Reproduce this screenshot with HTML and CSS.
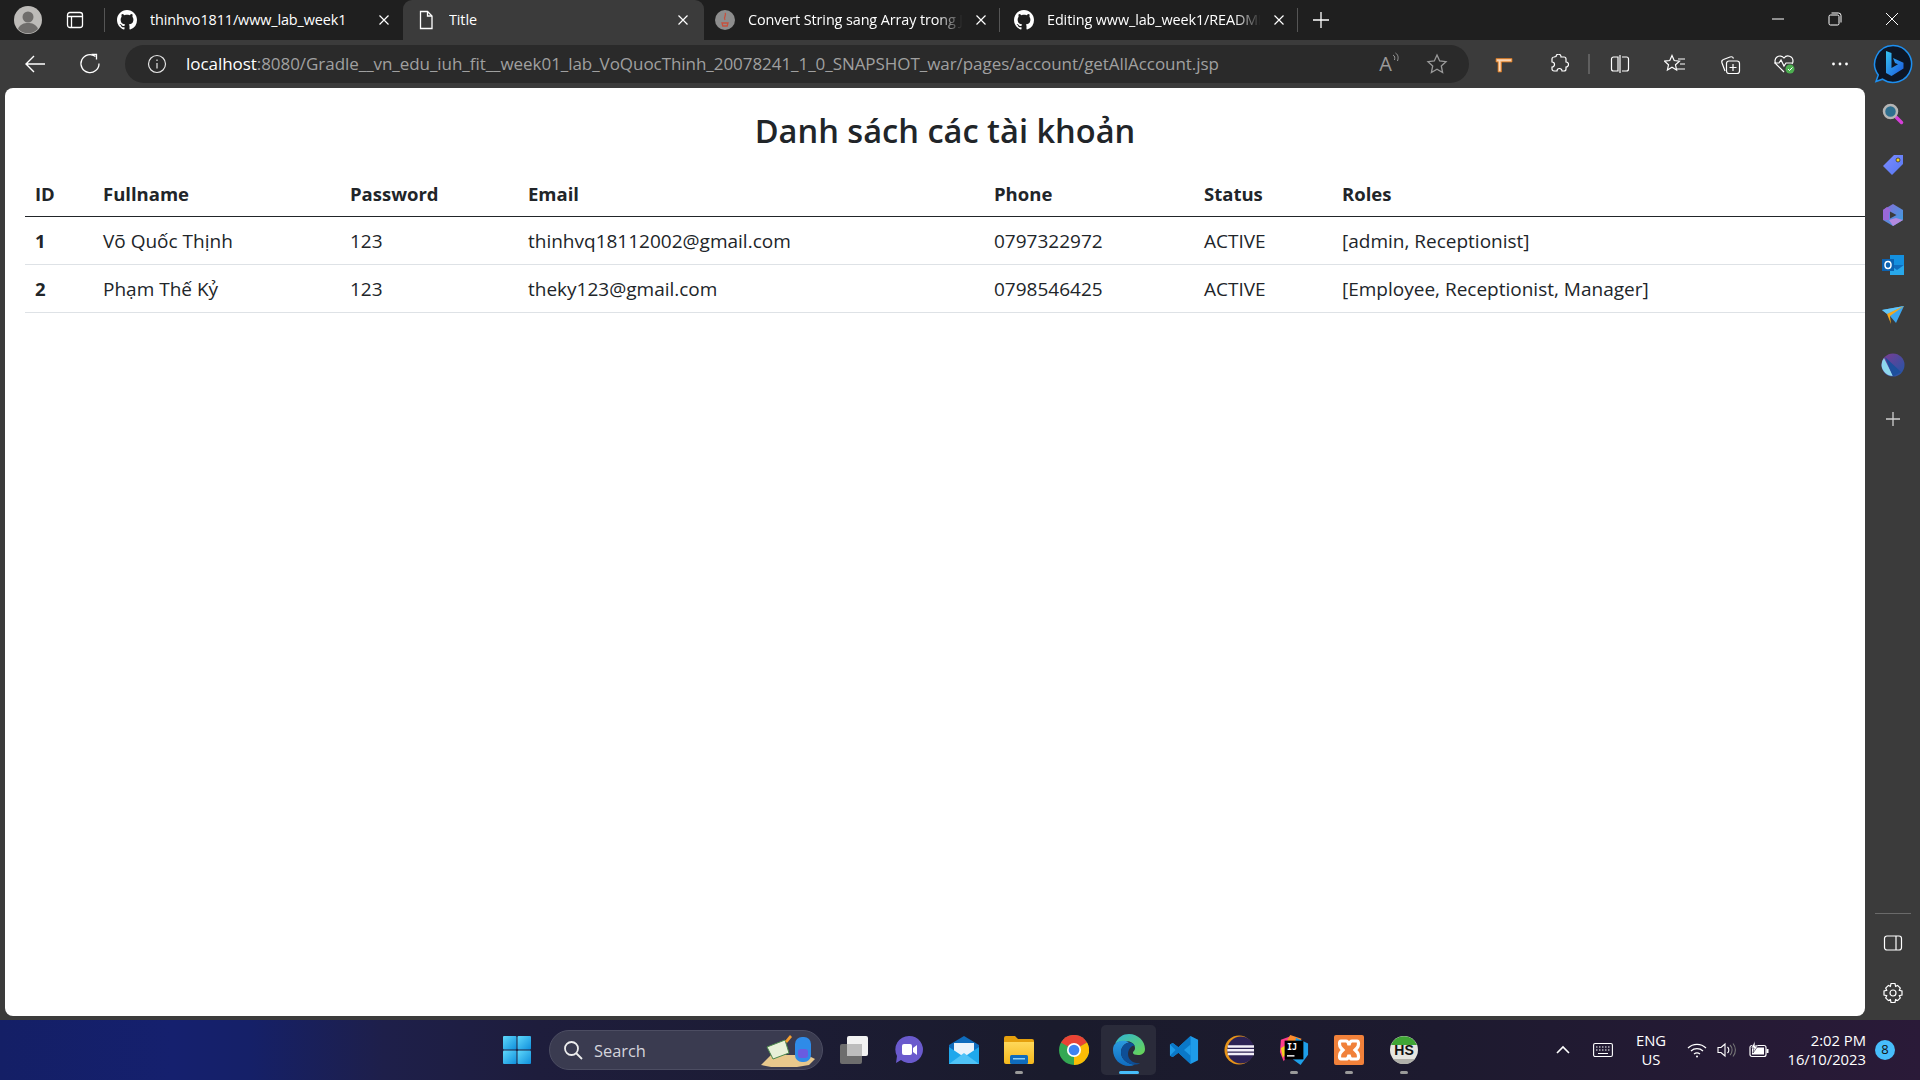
FILE: index.html
```html
<!DOCTYPE html>
<html lang="vi">
<head>
<meta charset="utf-8">
<title>Title</title>
<link rel="stylesheet" href="styles.css">
</head>
<body>
<svg class="defs" width="0" height="0"><defs>
<symbol id="gh" viewBox="0 0 16 16"><path fill="#fff" d="M8 0C3.58 0 0 3.58 0 8c0 3.54 2.29 6.53 5.47 7.59.4.07.55-.17.55-.38 0-.19-.01-.82-.01-1.49-2.01.37-2.53-.49-2.69-.94-.09-.23-.48-.94-.82-1.13-.28-.15-.68-.52-.01-.53.63-.01 1.08.58 1.23.82.72 1.21 1.87.87 2.33.66.07-.52.28-.87.51-1.07-1.78-.2-3.64-.89-3.64-3.95 0-.87.31-1.59.82-2.15-.08-.2-.36-1.02.08-2.12 0 0 .67-.21 2.2.82.64-.18 1.32-.27 2-.27.68 0 1.36.09 2 .27 1.53-1.04 2.2-.82 2.2-.82.44 1.1.16 1.92.08 2.12.51.56.82 1.27.82 2.15 0 3.07-1.87 3.75-3.65 3.95.29.25.54.73.54 1.48 0 1.07-.01 1.93-.01 2.2 0 .21.15.46.55.38A8.013 8.013 0 0016 8c0-4.42-3.58-8-8-8z"/></symbol>
<symbol id="x" viewBox="0 0 12 12"><path d="M1.5 1.5l9 9M10.5 1.5l-9 9" stroke="#fff" stroke-width="1.2" fill="none"/></symbol>
<linearGradient id="edgeA" x1="0" y1="0" x2="1" y2="1"><stop offset="0" stop-color="#2fb4d8"/><stop offset="1" stop-color="#6ad64f"/></linearGradient>
<linearGradient id="edgeB" x1="0" y1="0" x2="0" y2="1"><stop offset="0" stop-color="#2b9be0"/><stop offset="1" stop-color="#0f6cc0"/></linearGradient>
<linearGradient id="bingG" x1="0" y1="0" x2="1" y2="1"><stop offset="0" stop-color="#36c3f0"/><stop offset="1" stop-color="#1a56e0"/></linearGradient>
<linearGradient id="winG" x1="0" y1="0" x2="1" y2="1"><stop offset="0" stop-color="#5fd8fb"/><stop offset="1" stop-color="#0f8fdc"/></linearGradient>
<linearGradient id="tagG" x1="0" y1="0" x2="1" y2="1"><stop offset="0" stop-color="#7d8cff"/><stop offset="1" stop-color="#5577f2"/></linearGradient>
<linearGradient id="m365" x1="0" y1="0" x2="1" y2="1"><stop offset="0" stop-color="#8c6ad8"/><stop offset="1" stop-color="#35a3e0"/></linearGradient>
<linearGradient id="folderG" x1="0" y1="0" x2="0" y2="1"><stop offset="0" stop-color="#ffd85a"/><stop offset="1" stop-color="#f5b81c"/></linearGradient>
<linearGradient id="grad365" x1="0" y1="0" x2="1" y2="1"><stop offset="0" stop-color="#7f3b92"/><stop offset="1" stop-color="#1d57a8"/></linearGradient>
</defs></svg>

<header class="tabstrip">
  <div class="strip-btn avatar-cell">
    <svg width="28" height="28" viewBox="0 0 28 28"><circle cx="14" cy="14" r="14" fill="#bdbbb8"/><circle cx="14" cy="11" r="5.5" fill="#6f6d6b"/><path d="M4 23c2-5 6-6 10-6s8 1 10 6a14 14 0 0 1-20 0z" fill="#6f6d6b"/></svg>
  </div>
  <div class="strip-btn tabmode-cell">
    <svg width="18" height="18" viewBox="0 0 18 18" fill="none" stroke="#fff" stroke-width="1.3"><rect x="1.5" y="1.5" width="15" height="15" rx="2.5"/><path d="M1.5 5.5h15M5.5 5.5v11"/></svg>
  </div>
  <div class="tab tab-sep">
    <svg class="fav" viewBox="0 0 16 16"><use href="#gh"/></svg>
    <span class="tab-title">thinhvo1811/www_lab_week1</span>
    <svg class="close" viewBox="0 0 12 12"><use href="#x"/></svg>
  </div>
  <div class="tab tab-active">
    <svg class="fav" viewBox="0 0 20 20" fill="none" stroke="#fff" stroke-width="1.3"><path d="M4.500 1.500h7l4.500 4.500v12.500h-11.500z"/><path d="M11.500 1.500v4.500h4.500"/></svg>
    <span class="tab-title">Title</span>
    <svg class="close" viewBox="0 0 12 12"><use href="#x"/></svg>
  </div>
  <div class="tab tab-third">
    <svg class="fav" viewBox="0 0 20 20"><circle cx="10" cy="10" r="10" fill="#8d8d8d"/><path d="M10 3c2 2-2 4 0 7M7 13h6l-.8 3h-4.400z" stroke="#c8503c" stroke-width="1.300" fill="none"/></svg>
    <span class="tab-title tab-fade">Convert String sang Array trong Java</span>
    <svg class="close" viewBox="0 0 12 12"><use href="#x"/></svg>
  </div>
  <div class="tab tab-sep tab-fourth">
    <svg class="fav" viewBox="0 0 16 16"><use href="#gh"/></svg>
    <span class="tab-title tab-fade">Editing www_lab_week1/README.md</span>
    <svg class="close" viewBox="0 0 12 12"><use href="#x"/></svg>
  </div>
  <div class="newtab">
    <svg width="18" height="18" viewBox="0 0 18 18" stroke="#fff" stroke-width="1.300"><path d="M9 1v16M1 9h16"/></svg>
  </div>
  <div class="winctl">
    <div class="win-btn"><svg width="14" height="14" viewBox="0 0 14 14" stroke="#fff" stroke-width="1"><path d="M1 7h12"/></svg></div>
    <div class="win-btn"><svg width="14" height="14" viewBox="0 0 14 14" stroke="#fff" stroke-width="1" fill="none"><rect x="1" y="3" width="10" height="10" rx="1.500"/><path d="M3.500 1h7a2.500 2.500 0 0 1 2.500 2.500v7"/></svg></div>
    <div class="win-btn"><svg width="14" height="14" viewBox="0 0 14 14" stroke="#fff" stroke-width="1"><path d="M1 1l12 12M13 1l-12 12"/></svg></div>
  </div>
</header>

<nav class="toolbar">
  <div class="tb-btn"><svg width="22" height="22" viewBox="0 0 22 22" fill="none" stroke="#fff" stroke-width="1.400"><path d="M21 11H2M10 3l-8 8 8 8"/></svg></div>
  <div class="tb-btn"><svg width="22" height="22" viewBox="0 0 22 22" fill="none" stroke="#fff" stroke-width="1.300"><path d="M16.500 3.500a9 9 0 1 0 3.500 7"/><path d="M12.500 1.500h5v5"/></svg></div>
  <div class="addr">
    <svg class="addr-info" width="20" height="20" viewBox="0 0 20 20" fill="none" stroke="#e6e6e6" stroke-width="1.200"><circle cx="10" cy="10" r="8.500"/><path d="M10 9v5.500M10 5.500v1.500"/></svg>
    <div class="url"><span class="url-host">localhost</span>:8080/Gradle__vn_edu_iuh_fit__week01_lab_VoQuocThinh_20078241_1_0_SNAPSHOT_war/pages/account/getAllAccount.jsp</div>
    <div class="read-aloud"><span class="ra-a">A</span><svg width="8" height="12" viewBox="0 0 8 12" fill="none" stroke="#9a9a9a"><path d="M1 3c2 1 2 3 1.500 5M3.500 1c3 2 3 5 2 8"/></svg></div>
    <svg class="addr-star" width="22" height="22" viewBox="0 0 22 22" fill="none" stroke="#9a9a9a" stroke-width="1.300"><path d="M11 2l2.700 6 6.300.7-4.700 4.300 1.300 6.500-5.600-3.300-5.600 3.300 1.300-6.500-4.700-4.300 6.300-.7z"/></svg>
  </div>
  <div class="tb-btn tb-first"><svg width="18" height="18" viewBox="0 0 18 18"><path d="M1 3.500h16v3.500H6.500v10H3V7H1z" fill="#f2b27a" stroke="#d9761a" stroke-width=".7"/><path d="M2 5.200h14M4.700 5.500v10.500" stroke="#fde3c8" stroke-width="1"/></svg></div>
  <div class="tb-btn"><svg width="20" height="20" viewBox="0 0 20 20" fill="none" stroke="#fff" stroke-width="1.200"><path d="M7 2.500a2.500 2.500 0 0 1 5 .5h3a2 2 0 0 1 2 2v3a2.500 2.500 0 0 1 0 5v2a2 2 0 0 1-2 2h-2a2.500 2.500 0 0 0-5 0H5a2 2 0 0 1-2-2v-2a2.500 2.500 0 0 0 0-5V5a2 2 0 0 1 2-2z"/></svg></div>
  <div class="tb-sep"></div>
  <div class="tb-btn"><svg width="20" height="20" viewBox="0 0 20 20" fill="none" stroke="#fff" stroke-width="1.200"><path d="M8 3H3.500a2 2 0 0 0-2 2v10a2 2 0 0 0 2 2H8zM10 1v18M12 3h4.500a2 2 0 0 1 2 2v10a2 2 0 0 1-2 2H12"/></svg></div>
  <div class="tb-btn"><svg width="22" height="20" viewBox="0 0 22 20" fill="none" stroke="#fff" stroke-width="1.200"><path d="M8 1.500l2.200 5 5.300.6-4 3.700 1.100 5.200L8 13.300 3.400 16l1.100-5.200-4-3.700 5.300-.6z"/><path d="M14 5h7M16 10h5M13 15h8"/></svg></div>
  <div class="tb-btn"><svg width="22" height="22" viewBox="0 0 22 22" fill="none" stroke="#fff" stroke-width="1.200"><path d="M6 18L3 10c-.5-1.500 0-3 1.500-3.500L11 4c1.500-.5 3 0 3.500 1.500"/><rect x="7.500" y="8" width="13" height="12.500" rx="2.500"/><path d="M14 11v7M10.500 14.500h7"/></svg></div>
  <div class="tb-btn"><svg width="24" height="22" viewBox="0 0 24 22"><path d="M11 19L3 11a5 5 0 0 1 8-6 5 5 0 0 1 9 3 5 5 0 0 1-1 3" fill="none" stroke="#fff" stroke-width="1.200"/><path d="M1 10h5l2-3 3 6 2-3h6" fill="none" stroke="#fff" stroke-width="1.200"/><circle cx="17" cy="16" r="4.500" fill="#4caf50"/><path d="M15 16l1.500 1.500 3-3" stroke="#fff" fill="none"/></svg></div>
  <div class="tb-btn"><svg width="18" height="6" viewBox="0 0 18 6" fill="#fff"><circle cx="2.500" cy="3" r="1.400"/><circle cx="9" cy="3" r="1.400"/><circle cx="15.500" cy="3" r="1.400"/></svg></div>
  <div class="tb-bing"><svg width="40" height="40" viewBox="0 0 40 40"><path d="M20 1.500a18.500 18.500 0 1 1-10.500 33.700L3 37.500l2.300-6.500A18.500 18.500 0 0 1 20 1.500z" fill="#0d1626" stroke="#1d8ff0" stroke-width="1.500"/><path d="M13 7l5.500 2v15l6.500-3.800-3-1.200-2-5 10.500 4.800v5.700L18.500 32 13 29z" fill="url(#bingG)"/></svg></div>
</nav>

<div class="main">
  <main class="page">
    <h1 class="page-title">Danh sách các tài khoản</h1>
    <table class="accounts">
      <colgroup><col class="c-id"><col class="c-name"><col class="c-pass"><col class="c-mail"><col class="c-phone"><col class="c-status"><col class="c-roles"></colgroup>
      <thead><tr><th>ID</th><th>Fullname</th><th>Password</th><th>Email</th><th>Phone</th><th>Status</th><th>Roles</th></tr></thead>
      <tbody>
        <tr><th>1</th><td>Võ Quốc Thịnh</td><td>123</td><td>thinhvq18112002@gmail.com</td><td>0797322972</td><td>ACTIVE</td><td>[admin, Receptionist]</td></tr>
        <tr><th>2</th><td>Phạm Thế Kỷ</td><td>123</td><td>theky123@gmail.com</td><td>0798546425</td><td>ACTIVE</td><td>[Employee, Receptionist, Manager]</td></tr>
      </tbody>
    </table>
  </main>
  <aside class="sidebar">
    <div class="side-btn"><svg width="22" height="22" viewBox="0 0 22 22"><path d="M13.500 13.500l6 6" stroke="#d53fd8" stroke-width="3.500" stroke-linecap="round"/><circle cx="8.500" cy="8.500" r="6.500" fill="#2f6f8f" stroke="#b5b5b5" stroke-width="2.500"/></svg></div>
    <div class="side-btn"><svg width="22" height="22" viewBox="0 0 22 22"><path d="M12 1h9v9L10 21 1 12z" fill="url(#tagG)"/><circle cx="16" cy="6" r="2" fill="#f5d020" stroke="#333" stroke-width=".8"/></svg></div>
    <div class="side-btn"><svg width="22" height="24" viewBox="0 0 22 24"><path d="M11 1l10 6v10l-10 6-10-6V7z" fill="url(#m365)"/><path d="M1 7l4-3 4 3-2 3v7l-6 0z" fill="#9a68d8"/><path d="M7 17l7-2 7 2-10 6z" fill="#b48ae0"/><path d="M8 8.500l6.500 3.500L8 15.500z" fill="#3b3b3b"/></svg></div>
    <div class="side-btn"><svg width="22" height="22" viewBox="0 0 22 22"><rect x="8" y="1" width="14" height="20" fill="#1490df"/><path d="M8 11l14 0v10H8z" fill="#28a8ea"/><path d="M22 11l-7 5-7-5" fill="#0f6cbd"/><rect x="0" y="5" width="12" height="12" fill="#0c62b0"/><ellipse cx="6" cy="11" rx="3" ry="3.500" fill="none" stroke="#fff" stroke-width="1.500"/></svg></div>
    <div class="side-btn"><svg width="22" height="20" viewBox="0 0 22 20"><path d="M0 5l22-4-8 17-6-7z" fill="#3ba5ee"/><path d="M0 5l22-4L5 9z" fill="#62c5f8"/><path d="M5 9l17-8L8 11l1 8z" fill="#f2a81d"/></svg></div>
    <div class="side-btn"><svg width="24" height="24" viewBox="0 0 24 24"><circle cx="12" cy="12" r="11.500" fill="url(#grad365)"/><path d="M3 5l9 18A11.500 11.500 0 0 1 .5 12 11 11 0 0 1 3 5z" fill="#8ed8ee"/><path d="M4 4l16 15-8 4.500z" fill="#1d4f9c"/></svg></div>
    <div class="side-btn side-add"><svg width="16" height="16" viewBox="0 0 16 16" stroke="#cfcfcf" stroke-width="1.300"><path d="M8 1v14M1 8h14"/></svg></div>
    <div class="side-bottom">
      <div class="side-rule"></div>
      <div class="side-btn"><svg width="20" height="18" viewBox="0 0 20 18" fill="none" stroke="#fff" stroke-width="1.200"><rect x="1.500" y="2" width="17" height="14" rx="2.500"/><path d="M13 2v14"/></svg></div>
      <div class="side-btn"><svg width="22" height="22" viewBox="0 0 22 22" fill="none" stroke="#fff" stroke-width="1.200"><circle cx="11" cy="11" r="3"/><path d="M9 1.500h4l.6 2.800 2-.9 2.700 2.700-1 2.200 2.700.7v4l-2.700.7 1 2.200-2.700 2.700-2-.9-.6 2.800H9l-.6-2.800-2 .9-2.700-2.700 1-2.200-2.700-.7v-4l2.700-.7-1-2.200 2.700-2.700 2 .9z"/></svg></div>
    </div>
  </aside>
</div>

<footer class="taskbar">
  <div class="tk-btn"><svg width="30" height="30" viewBox="0 0 30 30" fill="url(#winG)"><rect x="1" y="1" width="13.500" height="13.500" rx="1"/><rect x="15.500" y="1" width="13.500" height="13.500" rx="1"/><rect x="1" y="15.500" width="13.500" height="13.500" rx="1"/><rect x="15.500" y="15.500" width="13.500" height="13.500" rx="1"/></svg></div>
  <div class="search">
    <svg class="search-ic" width="20" height="20" viewBox="0 0 20 20" fill="none" stroke="#eee" stroke-width="1.800"><circle cx="8.500" cy="8.500" r="6.500"/><path d="M13 13l6 6"/></svg>
    <span class="search-text">Search</span>
    <svg class="search-art" width="58" height="34" viewBox="0 0 58 34"><path d="M2 32l10-10h36l8 4-6 6-12 2H12z" fill="#e8c88c"/><path d="M8 14l18-7 4 13-16 6z" fill="#e8f0d8" stroke="#4d8a4d"/><path d="M26 8l5-6 2 2-5 6z" fill="#f5a030"/><rect x="36" y="4" width="16" height="25" rx="7" fill="#2f8be8"/><rect x="39" y="16" width="10" height="9" rx="3" fill="#6a5ce0"/></svg>
  </div>
  <div class="tk-btn tk-first"><svg width="30" height="30" viewBox="0 0 30 30"><rect x="1" y="9" width="22" height="20" rx="2" fill="#6d6d6d"/><rect x="8" y="1" width="21" height="20" rx="2" fill="#f2f2f2"/><rect x="8" y="9" width="15" height="12" fill="#bdbdbd"/></svg></div>
  <div class="tk-btn"><svg width="28" height="30" viewBox="0 0 28 30"><path d="M14 1a13.500 13.500 0 1 1-8 24l-5 3 1-7A13.500 13.500 0 0 1 14 1z" fill="#6a5acd"/><rect x="7" y="9" width="10" height="11" rx="2" fill="#fff"/><path d="M18 13l4-3v10l-4-3z" fill="#fff"/></svg></div>
  <div class="tk-btn"><svg width="30" height="30" viewBox="0 0 30 30"><path d="M15 1L30 10v19H0V10z" fill="#0f6cbd"/><path d="M5 8h20v10l-10 5-10-5z" fill="#eaf3fb"/><path d="M0 12l15 10 15-10v17H0z" fill="#1fa8ec"/><path d="M0 29l15-11 15 11z" fill="#4fc3f7"/></svg></div>
  <div class="tk-btn has-dot"><svg width="30" height="30" viewBox="0 0 30 30"><path d="M0 3a2 2 0 0 1 2-2h9l3 3h14a2 2 0 0 1 2 2v4H0z" fill="#e5a00d"/><path d="M0 7h30v20a2 2 0 0 1-2 2H2a2 2 0 0 1-2-2z" fill="url(#folderG)"/><rect x="6" y="20" width="18" height="9" rx="1.500" fill="#0f6cbd"/><rect x="9" y="23" width="12" height="1.500" fill="#8fd0f5"/></svg></div>
  <div class="tk-btn"><svg width="30" height="30" viewBox="0 0 32 32"><circle cx="16" cy="16" r="16" fill="#34a853"/><path d="M16 16L2.100 8A16 16 0 0 1 29.900 8z" fill="#ea4335"/><path d="M16 16L29.900 8A16 16 0 0 1 16 32z" fill="#fbbc05"/><circle cx="16" cy="16" r="7.500" fill="#fff"/><circle cx="16" cy="16" r="5.700" fill="#3f82f0"/></svg></div>
  <div class="tk-btn tk-active"><svg width="32" height="32" viewBox="0 0 32 32"><path d="M2 10C5 3 10 0 16 0c9 0 16 7 16 15 0 4-3 6-7 6-3 0-5-1-5-2 0-2 2-2 2-5 0-4-4-7-9-7C8 7 4 8 2 10z" fill="url(#edgeA)"/><path d="M1 11c3-4 8-5 12-4 2 .5 3 1.500 3 1.500-5 1-8 5-8 10 0 6 6 12 14 12-2 1-4 1.500-6 1.500C7 32 0 25 0 16c0-2 .4-3.500 1-5z" fill="url(#edgeB)"/><path d="M16 8.500c-5 1-8 5-8 10 0 6 6 12 14 12 2 0 3.500-.5 5-1.500-6 1-12-3-12-9 0-3 1-5 3-7 1-1 3-1.500 4-1-1-2-3.500-4-6-3.500z" fill="#0e4e96"/></svg></div>
  <div class="tk-btn"><svg width="30" height="30" viewBox="0 0 32 32"><path d="M23 1l8 4v22l-8 4L10 19l-6 4.500-3-1.500V10l3-1.500 6 4.500z" fill="#1e9be8"/><path d="M23 1v30l-13-12-6 4.500-3-1.500 6-6-6-6 3-1.500 6 4.500z" fill="#0a78c8"/><path d="M23 10l-7 6 7 6z" fill="#1e9be8"/></svg></div>
  <div class="tk-btn"><svg width="30" height="30" viewBox="0 0 32 32"><circle cx="16" cy="16" r="15.500" fill="#e89418"/><circle cx="18" cy="16" r="14.500" fill="#2c2255"/><path d="M4 11h28v2.500H4zM3.500 15h29v2.500h-29zM4 19h28v2.500H4z" fill="#f2eef8"/></svg></div>
  <div class="tk-btn has-dot"><svg width="30" height="30" viewBox="0 0 32 32"><path d="M2 5l11-4 6 5-14 22L1 18z" fill="#ff3d8b"/><path d="M12 0l12 4-4 10-14-4z" fill="#fd8d2e"/><path d="M18 3l13 6v12l-8 11-8-6z" fill="#1e9fe8"/><path d="M2 14l6-4 2 8-6 6z" fill="#f5d020"/><rect x="6" y="6" width="20" height="20" fill="#000"/><text x="8.500" y="16.500" class="ij-text">IJ</text><rect x="8.500" y="21.500" width="8" height="1.500" fill="#fff"/></svg></div>
  <div class="tk-btn has-dot"><svg width="30" height="30" viewBox="0 0 30 30"><rect width="30" height="30" rx="2" fill="#f1813a"/><path d="M7 6h5c2 0 2.500 2 3 4 .5-2 1-4 3-4h5c2 0 2 5 0 7l-2 2 2 2c2 2 2 7 0 7h-5c-2 0-2.500-2-3-4-.5 2-1 4-3 4H7c-2 0-2-5 0-7l2-2-2-2C5 11 5 6 7 6z" fill="none" stroke="#fff" stroke-width="3.200"/></svg></div>
  <div class="tk-btn has-dot"><svg width="28" height="28" viewBox="0 0 28 28"><circle cx="14" cy="14" r="14" fill="#e5e5e0"/><path d="M1 9a14 14 0 0 1 26 0z" fill="#3fa535"/><path d="M3 23a14 14 0 0 0 22 0z" fill="#b0b0aa"/><text x="14" y="19" class="hs-text">HS</text></svg></div>

  <div class="tray">
    <div class="tray-chev"><svg width="16" height="10" viewBox="0 0 16 10" fill="none" stroke="#fff" stroke-width="1.600"><path d="M2 8l6-6 6 6"/></svg></div>
    <div class="tray-kb"><svg width="20" height="16" viewBox="0 0 20 16" fill="none" stroke="#fff" stroke-width="1.100"><rect x=".6" y="1.500" width="18.800" height="13" rx="1.500"/><path d="M3 5h1.500M6 5h1.500M9 5h1.500M12 5h1.500M15 5h1.500M3 8h1.500M6 8h1.500M9 8h1.500M12 8h1.500M15 8h1.500M5 11.500h10"/></svg></div>
    <div class="tray-lang">ENG<br>US</div>
    <div class="tray-wifi"><svg width="20" height="16" viewBox="0 0 20 16" fill="none" stroke="#fff" stroke-width="1.300"><path d="M1 6a13 13 0 0 1 18 0M4 9a9 9 0 0 1 12 0M7 12a5 5 0 0 1 6 0"/><circle cx="10" cy="14.500" r="1" fill="#fff" stroke="none"/></svg></div>
    <div class="tray-vol"><svg width="20" height="16" viewBox="0 0 20 16" fill="none" stroke="#fff" stroke-width="1.100"><path d="M1 5.500h3l4-3.500v12l-4-3.500H1z"/><path d="M10.500 5a4 4 0 0 1 0 6"/><path d="M13 3a7 7 0 0 1 0 10M16 1.500a10 10 0 0 1 0 13" stroke="#777"/></svg></div>
    <div class="tray-bat"><svg width="20" height="18" viewBox="0 0 20 18"><rect x="1" y="4.500" width="16" height="11" rx="2" fill="none" stroke="#fff" stroke-width="1.200"/><rect x="3" y="6.500" width="12" height="7" fill="#fff"/><rect x="17.500" y="8" width="2" height="4" fill="#fff"/><path d="M6 0L2 7h3l-1 5 5-7H6z" fill="#fff" stroke="#241a33" stroke-width=".6"/></svg></div>
    <div class="tray-clock">2:02 PM<br>16/10/2023</div>
    <div class="tray-badge">8</div>
  </div>
</footer>
</body>
</html>
```
FILE: styles.css
```css
* { box-sizing: border-box; }
html, body { margin: 0; height: 100%; }
body {
  width: 1920px;
  height: 1080px;
  overflow: hidden;
  display: flex;
  flex-direction: column;
  font-family: "Open Sans", "Noto Sans", sans-serif;
  background: #3b3b3b;
}
.defs { position: absolute; }

.tabstrip {
  height: 40px;
  flex: none;
  display: flex;
  align-items: stretch;
  background: #1f1f1f;
  color: #fff;
}
.strip-btn { display: flex; align-items: center; justify-content: center; }
.avatar-cell { width: 56px; }
.tabmode-cell { width: 38px; margin-right: 11px; }
.tab {
  width: 298px;
  display: flex;
  align-items: center;
  padding: 0 13px 0 12px;
  font-size: 14.4px;
  letter-spacing: -0.1px;
  position: relative;
}
.tab-sep::before, .tab-third::after, .tab-fourth::after {
  content: "";
  position: absolute;
  top: 8px;
  bottom: 8px;
  width: 1px;
  background: #555;
}
.tab-sep::before { left: -1px; }
.tab-third::after { right: 0; }
.tab-fourth::after { right: 0; }
.tab-fourth::before { display: none; }
.tab-active {
  width: 301px;
  background: #3b3b3b;
  border-radius: 9px 9px 0 0;
  padding: 0 15px 0 13px;
  height: 40px;
}
.tab-third { width: 296px; padding-left: 11px; }
.tab-fourth { padding-left: 14px; }
.fav { width: 20px; height: 20px; flex: none; }
.tab-title {
  flex: 1;
  min-width: 0;
  margin-left: 13px;
  padding-bottom: 2px;
  white-space: nowrap;
  overflow: hidden;
}
.tab-fade { -webkit-mask-image: linear-gradient(to right, #000 86%, transparent 98%); mask-image: linear-gradient(to right, #000 86%, transparent 98%); }
.close { width: 12px; height: 12px; flex: none; margin-left: 8px; }
.newtab { width: 46px; display: flex; align-items: center; justify-content: center; }
.winctl { margin-left: auto; display: flex; }
.win-btn { width: 57px; display: flex; align-items: center; justify-content: center; padding-bottom: 2px; }

.toolbar {
  height: 48px;
  flex: none;
  display: flex;
  align-items: center;
  padding-left: 7px;
  background: #3b3b3b;
}
.tb-btn { width: 55px; height: 48px; flex: none; display: flex; align-items: center; justify-content: center; }
.tb-first { margin-left: 8px; width: 54px; }
.tb-sep { width: 2px; height: 20px; margin: 0 2px 0 2px; background: #5f5f5f; flex: none; }
.tb-bing { width: 52px; height: 48px; display: flex; align-items: center; justify-content: center; flex: none; }
.addr {
  width: 1344px;
  height: 38px;
  margin-left: 8px;
  flex: none;
  display: flex;
  align-items: center;
  padding-left: 22px;
  background: #2a2a2a;
  border-radius: 19px;
}
.addr-info { flex: none; }
.url {
  margin-left: 19px;
  padding-bottom: 2px;
  font-size: 17px;
  letter-spacing: -0.05px;
  color: #a0a0a0;
  white-space: nowrap;
}
.url-host { color: #fff; }
.read-aloud { margin-left: auto; display: flex; align-items: flex-start; color: #9a9a9a; font-size: 20px; line-height: 24px; }
.ra-a { display: block; }
.addr-star { margin: 0 21px 0 26px; flex: none; }

.main { flex: 1; min-height: 0; display: flex; background: #3b3b3b; }
.page {
  width: 1860px;
  height: 928px;
  margin-left: 5px;
  flex: none;
  background: #fff;
  border-radius: 8px;
  padding: 0 0 0 20px;
  color: #212529;
  overflow: hidden;
}
.page-title {
  margin: 0;
  height: 82px;
  display: flex;
  align-items: center;
  justify-content: center;
  font-size: 32.6px;
  font-weight: 600;
  padding-top: 2px;
}
.accounts {
  width: 1840px;
  table-layout: fixed;
  border-collapse: separate;
  border-spacing: 0;
  font-size: 19px;
}
.c-id { width: 68px; }
.c-name { width: 247px; }
.c-pass { width: 178px; }
.c-mail { width: 466px; }
.c-phone { width: 210px; }
.c-status { width: 138px; }
.c-roles { width: 533px; }
.accounts th, .accounts td {
  padding: 0 10px;
  height: 48px;
  text-align: left;
  border-bottom: 1px solid #dee2e6;
  font-weight: 400;
}
.accounts th { font-weight: 700; font-size: 18.5px; }
.accounts thead th { height: 47px; border-bottom: 1px solid #212529; }

.sidebar { width: 55px; height: 930px; flex: none; display: flex; flex-direction: column; align-items: center; }
.side-btn { width: 55px; height: 50px; flex: none; display: flex; align-items: center; justify-content: center; }
.side-btn:first-child { margin-top: 1px; }
.side-btn:nth-child(2) { margin-top: 1px; }
.side-add { margin-top: 4px; }
.side-bottom { margin-top: auto; display: flex; flex-direction: column; align-items: center; }
.side-rule { width: 36px; height: 1px; background: #6a6a6a; margin-bottom: 3px; }

.taskbar {
  height: 60px;
  flex: none;
  display: flex;
  align-items: center;
  padding-left: 489px;
  background: linear-gradient(to right, #141f66 0%, #15206e 9%, #152068 13%, #1e1f4a 20%, #1e1d3c 28%, #1a1b2c 55%, #1d1a2f 75%, #2a1a38 100%);
  color: #fff;
}
.tk-btn { width: 55px; height: 50px; flex: none; display: flex; align-items: center; justify-content: center; position: relative; }
.tk-first { margin-left: 3px; }
.has-dot::after {
  content: "";
  position: absolute;
  left: 50%;
  bottom: 1px;
  width: 8px;
  height: 3px;
  margin-left: -4px;
  border-radius: 2px;
  background: #9a9a9a;
}
.tk-active { background: #2a2b3a; border-radius: 5px; }
.tk-active::after {
  content: "";
  position: absolute;
  left: 50%;
  bottom: 1px;
  width: 20px;
  height: 3px;
  margin-left: -10px;
  border-radius: 2px;
  background: #47bdfb;
}
.search {
  width: 274px;
  height: 40px;
  margin-left: 5px;
  flex: none;
  display: flex;
  align-items: center;
  padding-left: 13px;
  background: #3a3b50;
  border: 1px solid #4c4d62;
  border-radius: 20px;
}
.search-ic { flex: none; }
.search-text { margin-left: 11px; font-size: 16.4px; color: #d4d4dc; }
.search-art { margin-left: auto; margin-right: 5px; }
.ij-text { font: 700 9px "DejaVu Sans Mono", monospace; fill: #fff; }
.hs-text { font: 700 14px "Liberation Sans", sans-serif; fill: #111; text-anchor: middle; }

.tray { margin-left: auto; display: flex; align-items: center; padding-right: 25px; font-size: 14.8px; line-height: 19.5px; }
.tray > div { display: flex; align-items: center; justify-content: center; flex: none; }
.tray-chev { width: 40px; margin-left: 1px; }
.tray-kb { width: 40px; }
.tray-lang { width: 56px; text-align: center; }
.tray-wifi { width: 32px; margin-left: 2px; }
.tray-vol { width: 28px; }
.tray-bat { width: 35px; }
.tray .tray-clock { width: 90px; display: block; text-align: right; }
.tray .tray-badge {
  width: 20px;
  height: 20px;
  margin-left: 9px;
  border-radius: 50%;
  background: #47bdfb;
  color: #111;
  font-size: 13px;
}
```
